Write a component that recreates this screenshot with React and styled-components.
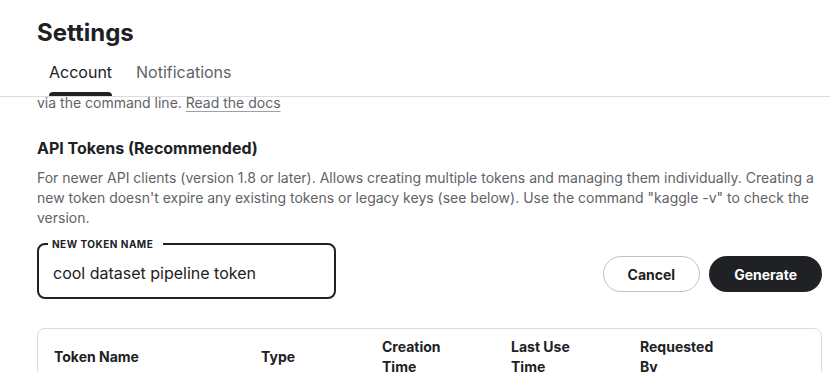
import React, { useLayoutEffect, useRef } from 'react';
import styled, { createGlobalStyle } from 'styled-components';

const GlobalStyle = createGlobalStyle`
  html, body {
    margin: 0;
    padding: 0;
    height: 100%;
    overflow: hidden;
    background: #ffffff;
  }
  body {
    font-family: Inter, "Noto Sans", "Liberation Sans", sans-serif;
    color: #202124;
    -webkit-font-smoothing: antialiased;
  }
  #root {
    height: 100%;
  }
`;

const Page = styled.div`
  height: 100vh;
  display: flex;
  flex-direction: column;
`;

const Header = styled.header`
  flex: none;
  padding: 17px 8px 0 37px;
  border-bottom: 1px solid #dadce0;
`;

const PageTitle = styled.h1`
  margin: 0;
  font-size: 24px;
  line-height: 32px;
  font-weight: 700;
  color: #202124;
`;

const Tabs = styled.nav`
  display: flex;
  margin-top: 11px;
`;

const Tab = styled.button`
  position: relative;
  border: 0;
  background: none;
  padding: 0 12px 12px;
  font-family: inherit;
  font-size: 16px;
  line-height: 24px;
  color: ${(p) => (p.$active ? '#202124' : '#5f6368')};
  cursor: pointer;

  &::after {
    content: '';
    display: ${(p) => (p.$active ? 'block' : 'none')};
    position: absolute;
    left: 12px;
    right: 12px;
    bottom: 0;
    height: 4px;
    border-radius: 4px 4px 0 0;
    background: #202124;
  }
`;

const Scroller = styled.main`
  position: relative;
  flex: 1;
  overflow: hidden;
  padding: 0 8px 0 37px;
`;

const Text = styled.p`
  margin: 0;
  font-size: 14px;
  line-height: 20px;
  color: #5f6368;
`;

const DocsLink = styled.a`
  color: #5f6368;
  text-decoration: underline;
  text-decoration-color: #9aa0a6;
  text-underline-offset: 3px;
`;

const Section = styled.section`
  margin-top: ${(p) => p.$top || 0}px;
`;

const SectionTitle = styled.h2`
  margin: 0 0 8px;
  font-size: 16px;
  line-height: 24px;
  font-weight: 700;
  color: #202124;
`;

const FormRow = styled.div`
  display: flex;
  align-items: flex-end;
  justify-content: space-between;
  margin-top: 10px;
`;

const Field = styled.fieldset`
  margin: 0;
  width: 299px;
  box-sizing: border-box;
  padding: 0 14px;
  border: 2px solid #202124;
  border-radius: 8px;
`;

const FieldLabel = styled.legend`
  margin-left: -5px;
  padding: 0 10px 0 4px;
  font-size: 10px;
  line-height: 12px;
  font-weight: 700;
  letter-spacing: 0.5px;
  text-transform: uppercase;
  color: #202124;
`;

const Input = styled.input`
  display: block;
  width: 100%;
  height: 46px;
  margin: 0;
  padding: 0 0 1px;
  border: 0;
  outline: none;
  background: transparent;
  font-family: inherit;
  font-size: 16px;
  color: #202124;
`;

const Actions = styled.div`
  display: flex;
  gap: 9px;
  padding-bottom: 7px;
`;

const Button = styled.button`
  height: 36px;
  box-sizing: border-box;
  padding: 0 ${(p) => (p.$primary ? 25 : 24)}px;
  border-radius: 20px;
  border: ${(p) => (p.$primary ? '0' : '1px solid #bdc1c6')};
  background: ${(p) => (p.$primary ? '#202124' : '#ffffff')};
  color: ${(p) => (p.$primary ? '#ffffff' : '#202124')};
  font-family: inherit;
  font-size: 14px;
  font-weight: 700;
  cursor: pointer;
`;

const TableCard = styled.div`
  margin-top: 29px;
  border: 1px solid #dadce0;
  border-radius: 8px;
`;

const HeadRow = styled.div`
  display: grid;
  grid-template-columns: 207px 121px 129px 129px 129px 1fr;
  align-items: center;
  min-height: 56px;
`;

const HeadCell = styled.div`
  padding: 0 32px 0 16px;
  font-size: 14px;
  line-height: 20px;
  font-weight: 700;
  color: #202124;
`;

const columns = ['Token Name', 'Type', 'Creation Time', 'Last Use Time', 'Requested By', ''];

export default function App() {
  const scrollerRef = useRef(null);
  const introRef = useRef(null);

  useLayoutEffect(() => {
    const intro = introRef.current;
    // page is scrolled so the last intro line sits just under the header
    scrollerRef.current.scrollTop = intro.offsetTop + intro.offsetHeight - 16;
  }, []);

  return (
    <Page>
      <GlobalStyle />
      <Header>
        <PageTitle>Settings</PageTitle>
        <Tabs>
          <Tab $active>Account</Tab>
          <Tab>Notifications</Tab>
        </Tabs>
      </Header>

      <Scroller ref={scrollerRef}>
        <Section $top={24}>
          <SectionTitle>API</SectionTitle>
          <Text ref={introRef}>
            Using Kaggle's beta API, you can interact with Competitions and Datasets to download
            data, make submissions, and more
            <br />
            via the command line. <DocsLink href="#">Read the docs</DocsLink>
          </Text>
        </Section>

        <Section $top={23}>
          <SectionTitle>API Tokens (Recommended)</SectionTitle>
          <Text>
            For newer API clients (version 1.8 or later). Allows creating multiple tokens and
            managing them individually. Creating a new token doesn't expire any existing tokens
            or legacy keys (see below). Use the command "kaggle -v" to check the version.
          </Text>

          <FormRow>
            <Field>
              <FieldLabel>New token name</FieldLabel>
              <Input defaultValue="cool dataset pipeline token" />
            </Field>
            <Actions>
              <Button>Cancel</Button>
              <Button $primary>Generate</Button>
            </Actions>
          </FormRow>

          <TableCard>
            <HeadRow>
              {columns.map((c, i) => (
                <HeadCell key={i}>{c}</HeadCell>
              ))}
            </HeadRow>
          </TableCard>
        </Section>
      </Scroller>
    </Page>
  );
}
